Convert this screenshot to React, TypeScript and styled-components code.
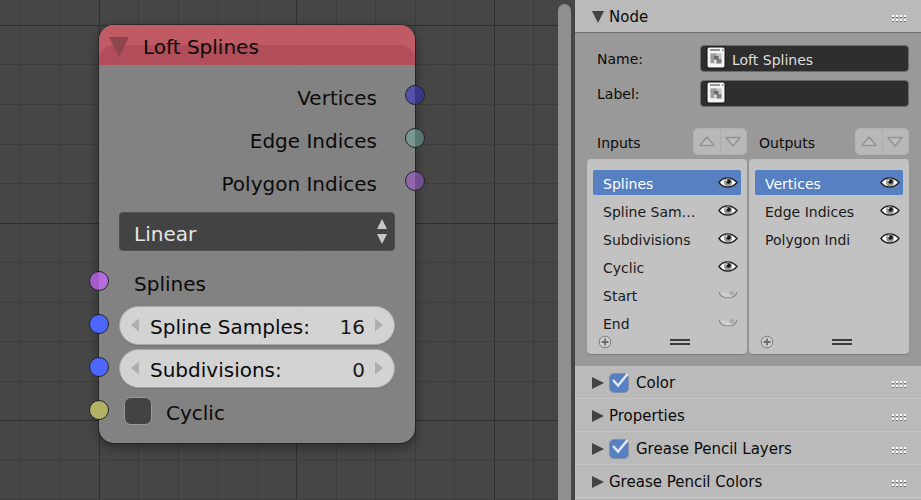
import React, { useState } from "react";
import styled, { createGlobalStyle } from "styled-components";

const GlobalStyle = createGlobalStyle`
  *, *::before, *::after { box-sizing: border-box; }
  html, body, #root { height: 100%; margin: 0; }
  body { background: #464646; }
  body, button, input, select { font-family: "DejaVu Sans", sans-serif; }
  button { padding: 0; border: 0; background: none; color: inherit; }
  input, select { margin: 0; outline: none; }
`;

const Screen = styled.div`
  display: grid;
  grid-template-columns: minmax(0, 1fr) 346px;
  height: 100vh;
  overflow: hidden;
  color: #0b0b0b;
`;

/* ---------- Node editor ---------- */

const Editor = styled.main`
  position: relative;
  display: flex;
  justify-content: flex-end;
  overflow: hidden;
  background: #464646;
`;

const GridLayer = styled.svg`
  position: absolute;
  inset: 0;
  width: 100%;
  height: 100%;
`;

const Track = styled.div`
  position: relative;
  display: flex;
  width: 17px;
  padding: 4px 4px 0 0;
  background: #464646;
`;

const Thumb = styled.div`
  flex: 1;
  border-radius: 7px 7px 0 0;
  background: #8f8f8f;
`;

const NodeCard = styled.section`
  position: absolute;
  left: 99px;
  top: 25px;
  width: 316px;
  border-radius: 15px;
  background: rgba(134, 134, 134, 0.95);
  box-shadow: 0 0 0 1px rgba(20, 20, 20, 0.45), 0 4px 12px rgba(0, 0, 0, 0.4);
  font-size: 20px;
  line-height: 24px;
`;

const NodeHeader = styled.header`
  position: relative;
  display: flex;
  align-items: center;
  gap: 14px;
  height: 40px;
  padding: 4px 10px 0;
  border-radius: 15px 15px 0 0;
  background: #c05a64;
  overflow: hidden;

  &::before {
    content: "";
    position: absolute;
    inset: 20px 0 0;
    border-radius: 15px 15px 0 0;
    background: #b24e59;
  }
`;

const Collapse = styled.button`
  position: relative;
  display: flex;
`;

const NodeTitle = styled.h1`
  position: relative;
  margin: 0;
  font-size: 20px;
  font-weight: 400;
`;

const NodeBody = styled.div`
  display: flex;
  flex-direction: column;
  padding: 8px 20px 12px;
`;

const SocketRow = styled.div<{ $out?: boolean }>`
  position: relative;
  display: flex;
  align-items: center;
  justify-content: ${(p) => (p.$out ? "flex-end" : "flex-start")};
  height: 43px;
  margin: 0 -20px;
  padding: 3px ${(p) => (p.$out ? 38 : 20)}px 0 20px;
`;

const Socket = styled.span<{ $fill: string; $inner: string; $right?: boolean }>`
  position: absolute;
  top: 12px;
  ${(p) => (p.$right ? "right" : "left")}: -10px;
  width: 20px;
  height: 20px;
  border: 1px solid #232323;
  border-radius: 50%;
  background: linear-gradient(90deg, ${(p) => p.$fill} 50%, ${(p) => p.$inner} 50%);
`;

const SocketText = styled.span<{ $indent?: boolean }>`
  padding: 3px 0 0 ${(p) => (p.$indent ? 15 : 0)}px;
`;

const SelectWrap = styled.div`
  position: relative;
  display: flex;
  margin: 10px 0 8px;

  svg {
    position: absolute;
    right: 7px;
    top: 6px;
    pointer-events: none;
  }
`;

const Select = styled.select`
  appearance: none;
  flex: 1;
  height: 39px;
  padding: 4px 30px 0 14px;
  border: 1px solid #4f4f4f;
  border-radius: 4px;
  background: #434343;
  color: #e6e6e6;
  font-size: 20px;
`;

const NumberBox = styled.div`
  display: flex;
  align-items: center;
  flex: 1;
  min-width: 0;
  height: 39px;
  padding: 0 11px;
  border: 1px solid #a8a8a8;
  border-radius: 20px;
  background: #d3d3d3;
  box-shadow: 0 1px 0 #747474;
`;

const NumberLabel = styled.label`
  flex: none;
  padding: 4px 0 0 11px;
`;

const NumberInput = styled.input`
  flex: 1;
  min-width: 0;
  padding: 4px 10px 0 0;
  border: 0;
  background: none;
  color: #1a1a1a;
  font-size: 20px;
  line-height: 24px;
  text-align: right;
`;

const Arrow = styled.button`
  display: flex;
`;

const NodeTick = styled.input`
  appearance: none;
  width: 28px;
  height: 28px;
  margin: 0 14px 0 5px;
  border: 1px solid #999;
  border-radius: 7px;
  background: #434343;

  &:checked { background: #5680c2; }
`;

/* ---------- Side panel ---------- */

const Side = styled.aside`
  display: flex;
  flex-direction: column;
  min-width: 0;
  background: #b9b9b9;
  overflow: hidden;
  font-size: 15px;
  line-height: 20px;
`;

const SectionBar = styled.header<{ $open?: boolean }>`
  display: flex;
  align-items: center;
  flex: none;
  height: 33px;
  padding: 2px 14px 0 16px;
  border-bottom: 1px solid ${(p) => (p.$open ? "#6e6e6e" : "#c6c6c6")};
  background: #bababa;
`;

const Disclosure = styled.button`
  display: flex;
  width: 16px;
  margin-right: 2px;
`;

const SectionTitle = styled.h2`
  flex: 1;
  margin: 0;
  font-size: 15px;
  font-weight: 400;
`;

const GripHandle = styled.span`
  display: flex;
  padding-top: 4px;
`;

const TickLabel = styled.label`
  position: relative;
  display: flex;
  align-items: center;
  gap: 7px;

  svg {
    position: absolute;
    left: 2px;
    top: 0;
    pointer-events: none;
  }
`;

const Tick = styled.input`
  appearance: none;
  width: 20px;
  height: 20px;
  border: 1px solid #8591a6;
  border-radius: 5px;
  background: #999;

  &:checked { background: #5680c2; }
  &:not(:checked) + svg { display: none; }
`;

const Settings = styled.div`
  flex: none;
  padding: 12px;
  background: #999;
  font-size: 14px;
`;

const Field = styled.div`
  position: relative;
  display: grid;
  grid-template-columns: 103px 1fr;
  align-items: center;
  height: 27px;
  margin-bottom: 8px;
  padding-left: 10px;

  svg {
    position: absolute;
    left: 119px;
    top: 1px;
    pointer-events: none;
  }
`;

const TextInput = styled.input`
  width: 100%;
  height: 27px;
  padding: 2px 8px 0 31px;
  border: 1px solid #6a6a6a;
  border-radius: 4px;
  background: #2e2e2e;
  color: #dedede;
  font-size: 14px;
`;

const Lists = styled.div`
  display: grid;
  grid-template-columns: 1fr 1fr;
  gap: 4px 2px;
  padding-top: 13px;
`;

const ListHead = styled.div`
  display: flex;
  align-items: center;
  justify-content: space-between;
  height: 27px;
  padding-left: 10px;
`;

const ListTitle = styled.h3`
  margin: 0;
  padding-top: 2px;
  font-size: 14px;
  font-weight: 400;
`;

const MoveGroup = styled.div`
  display: flex;
  width: 54px;
  height: 27px;
  border: 1px solid #b2b2b2;
  border-radius: 5px;
  background: #b8b8b8;
`;

const MoveButton = styled.button`
  display: flex;
  flex: 1;
  align-items: center;
  justify-content: center;

  & + & { border-left: 1px solid #acacac; }
`;

const ListBox = styled.div`
  display: flex;
  flex-direction: column;
  justify-content: space-between;
  min-width: 0;
  height: 195px;
  padding: 11px 6px 9px;
  border-radius: 4px;
  background: #c2c2c2;
  box-shadow: 0 1px 1px #7d7d7d;
`;

const Items = styled.ul`
  display: flex;
  flex-direction: column;
  gap: 3px;
  margin: 0;
  padding: 0;
  list-style: none;
`;

const Item = styled.li<{ $active: boolean }>`
  display: flex;
  align-items: center;
  height: 25px;
  padding: 0 3px 0 10px;
  border-radius: 2px;
  background: ${(p) => (p.$active ? "#5680c2" : "transparent")};
  color: ${(p) => (p.$active ? "#fff" : "#1a1a1a")};
`;

const ItemName = styled.button`
  flex: 1;
  min-width: 0;
  padding-top: 2px;
  overflow: hidden;
  font-size: 14px;
  line-height: 20px;
  text-align: left;
  white-space: nowrap;
`;

const EyeButton = styled.button`
  display: flex;
`;

const ListFoot = styled.div`
  display: grid;
  grid-template-columns: 72px 20px;
  align-items: center;
  height: 10px;
  padding-left: 5px;
`;

const FootButton = styled.button`
  display: flex;
`;

function BackgroundGrid() {
  const lines = Array.from({ length: 60 }, (_, i) => i - 5);
  const lineColor = (i: number) => (i % 5 === 0 ? "#303030" : "#3d3d3d");
  return (
    <GridLayer aria-hidden="true">
      {lines.map((i) => (
        <rect key={`v${i}`} x={Math.floor(99 + i * 39.5)} y="0" width="1" height="100%" fill={lineColor(i)} />
      ))}
      {lines.map((i) => (
        <rect key={`h${i}`} x="0" y={Math.floor(25.4 + i * 39.55)} width="100%" height="1" fill={lineColor(i)} />
      ))}
    </GridLayer>
  );
}

function Grip() {
  const dots = [0, 4, 8, 12].flatMap((x) => [0, 4].map((y) => ({ x, y })));
  return (
    <GripHandle>
      <svg width="16" height="8" aria-hidden="true" shapeRendering="crispEdges">
        {dots.map(({ x, y }) => (
          <g key={`${x}-${y}`}>
            <rect x={x + 1} y={y} width="2" height="2" fill="#fff" />
            <rect x={x + 1} y={y + 2} width="2" height="1" fill="#707070" />
          </g>
        ))}
      </svg>
    </GripHandle>
  );
}

function NodeIcon() {
  return (
    <svg width="20" height="23" viewBox="0 0 20 23" aria-hidden="true">
      <rect x="1" y="1" width="18" height="21" rx="2" fill="#f4f4f4" stroke="#111" />
      <path d="M4 4h10M16 4h1.500" stroke="#777" strokeWidth="1.300" />
      <path d="M4.500 7.500h11v10.500h-11z" fill="#e0e0e0" />
      <path d="M4.500 7.500h11v5h-11z" fill="#c4c4c4" />
      <path d="M4.500 7.500h6v4.500H8v5H4.500z" fill="#9b9b9b" />
      <path d="M10.500 13h5v4.500h-5z" fill="#808080" />
      <path d="M8 10h4.500v3.500H8z" fill="#6a6a6a" />
    </svg>
  );
}

function Eye({ open }: { open: boolean }) {
  if (!open) {
    return (
      <svg width="20" height="14" viewBox="0 0 20 14" aria-hidden="true">
        <path d="M1 4c4 2 13 0 18-1-1 6-4 8-9 8S2 9 1 4z" fill="#cfcfcf" />
        <ellipse cx="14" cy="5" rx="3" ry="2.500" fill="#aeaeae" />
        <path d="M1 4c2 8 16 8 18 0" fill="none" stroke="#8c8c8c" strokeWidth="1.200" />
      </svg>
    );
  }
  return (
    <svg width="20" height="14" viewBox="0 0 20 14" aria-hidden="true">
      <path d="M1 6.500C5 .5 14 .5 19 6.500 14 12.500 5 12.500 1 6.500z" fill="#fff" stroke="#222" strokeWidth="1.400" />
      <circle cx="10" cy="6.200" r="4" fill="#999" />
      <circle cx="10.500" cy="5.500" r="2.300" fill="#161616" />
      <circle cx="8.500" cy="4.500" r="1" fill="#e2e2e2" />
    </svg>
  );
}

type Entry = { name: string; visible: boolean };

function SocketList({ title, entries }: { title: string; entries: Entry[] }) {
  const [active, setActive] = useState(0);
  return (
    <ListBox>
      <Items aria-label={title}>
        {entries.map((entry, i) => (
          <Item key={entry.name} $active={i === active}>
            <ItemName type="button" onClick={() => setActive(i)}>{entry.name}</ItemName>
            <EyeButton type="button" aria-label={`Toggle ${entry.name}`}>
              <Eye open={entry.visible} />
            </EyeButton>
          </Item>
        ))}
      </Items>
      <ListFoot>
        <FootButton type="button" aria-label="Filter">
          <svg width="14" height="14" viewBox="0 0 14 14">
            <circle cx="7" cy="7" r="5.800" fill="#cecece" stroke="#7c7c7c" />
            <path d="M7 3.500v7M3.500 7h7" stroke="#6a6a6a" strokeWidth="1.800" />
          </svg>
        </FootButton>
        <FootButton type="button" aria-label="Resize list">
          <svg width="20" height="8" shapeRendering="crispEdges">
            <path d="M0 2h20M0 6h20" stroke="#3c3c3c" strokeWidth="2" />
          </svg>
        </FootButton>
      </ListFoot>
    </ListBox>
  );
}

function ListHeader({ title }: { title: string }) {
  return (
    <ListHead>
      <ListTitle>{title}</ListTitle>
      <MoveGroup>
        <MoveButton type="button" aria-label={`Move up in ${title}`}>
          <svg width="16" height="11" viewBox="0 0 16 11">
            <path d="M8 1l7 8.500H1z" fill="#bebebe" stroke="#939393" strokeWidth="1.400" strokeLinejoin="round" />
          </svg>
        </MoveButton>
        <MoveButton type="button" aria-label={`Move down in ${title}`}>
          <svg width="16" height="11" viewBox="0 0 16 11">
            <path d="M8 10l7-8.500H1z" fill="#bebebe" stroke="#939393" strokeWidth="1.400" strokeLinejoin="round" />
          </svg>
        </MoveButton>
      </MoveGroup>
    </ListHead>
  );
}

function NumberField({ id, label, initial }: { id: string; label: string; initial: string }) {
  const [value, setValue] = useState(initial);
  const step = (by: number) => setValue(String(Number(value) + by));
  return (
    <NumberBox>
      <Arrow type="button" aria-label={`Decrease ${label}`} onClick={() => step(-1)}>
        <svg width="8" height="14"><path d="M0 7l8-6.500v13z" fill="#adadad" /></svg>
      </Arrow>
      <NumberLabel htmlFor={id}>{label}:</NumberLabel>
      <NumberInput id={id} value={value} onChange={(e) => setValue(e.target.value)} />
      <Arrow type="button" aria-label={`Increase ${label}`} onClick={() => step(1)}>
        <svg width="8" height="14"><path d="M8 7L0 .5v13z" fill="#adadad" /></svg>
      </Arrow>
    </NumberBox>
  );
}

function ClosedSection({ title, tick }: { title: string; tick?: boolean }) {
  return (
    <SectionBar>
      <Disclosure type="button" aria-label={`Expand ${title}`}>
        <svg width="14" height="14"><path d="M1 1l12 6-12 6z" fill="#434343" /></svg>
      </Disclosure>
      <SectionTitle>
        {tick ? (
          <TickLabel>
            <Tick type="checkbox" defaultChecked />
            <svg width="20" height="16" viewBox="0 0 20 16">
              <path d="M2 7l5 5.500L16.500 1" fill="none" stroke="#e0e7f2" strokeWidth="2.500" />
            </svg>
            {title}
          </TickLabel>
        ) : (
          title
        )}
      </SectionTitle>
      <Grip />
    </SectionBar>
  );
}

const outputs = [
  { name: "Vertices", fill: "#5252a8", inner: "#373788" },
  { name: "Edge Indices", fill: "#789794", inner: "#587773" },
  { name: "Polygon Indices", fill: "#9066ac", inner: "#724d8d" },
];

const inputEntries: Entry[] = [
  { name: "Splines", visible: true },
  { name: "Spline Sam…", visible: true },
  { name: "Subdivisions", visible: true },
  { name: "Cyclic", visible: true },
  { name: "Start", visible: false },
  { name: "End", visible: false },
];

const outputEntries: Entry[] = [
  { name: "Vertices", visible: true },
  { name: "Edge Indices", visible: true },
  { name: "Polygon Indi", visible: true },
];

export default function App() {
  const [name, setName] = useState("Loft Splines");
  const [label, setLabel] = useState("");

  return (
    <>
      <GlobalStyle />
      <Screen>
        <Editor>
          <BackgroundGrid />
          <NodeCard>
            <NodeHeader>
              <Collapse type="button" aria-label="Collapse node">
                <svg width="20" height="20"><path d="M0 0h20L10 20z" fill="#8e464d" /></svg>
              </Collapse>
              <NodeTitle>Loft Splines</NodeTitle>
            </NodeHeader>
            <NodeBody>
              {outputs.map((o) => (
                <SocketRow key={o.name} $out>
                  <SocketText>{o.name}</SocketText>
                  <Socket $right $fill={o.fill} $inner={o.inner} />
                </SocketRow>
              ))}
              <SelectWrap>
                <Select aria-label="Interpolation" defaultValue="Linear">
                  <option>Linear</option>
                </Select>
                <svg width="12" height="27" aria-hidden="true">
                  <path d="M1 11L6 1l5 10zM1 16h10L6 26z" fill="#c6c6c6" />
                </svg>
              </SelectWrap>
              <SocketRow>
                <Socket $fill="#a45bc8" $inner="#b66cda" />
                <SocketText $indent>Splines</SocketText>
              </SocketRow>
              <SocketRow>
                <Socket $fill="#4c66ff" $inner="#4c66ff" />
                <NumberField id="samples" label="Spline Samples" initial="16" />
              </SocketRow>
              <SocketRow>
                <Socket $fill="#4c66ff" $inner="#4c66ff" />
                <NumberField id="subdivisions" label="Subdivisions" initial="0" />
              </SocketRow>
              <SocketRow>
                <Socket $fill="#b2b266" $inner="#b2b266" />
                <NodeTick id="cyclic" type="checkbox" />
                <SocketText as="label" htmlFor="cyclic">Cyclic</SocketText>
              </SocketRow>
            </NodeBody>
          </NodeCard>
          <Track>
            <Thumb />
          </Track>
        </Editor>

        <Side>
          <SectionBar $open>
            <Disclosure type="button" aria-label="Collapse Node">
              <svg width="14" height="14"><path d="M1 1h12L7 13z" fill="#434343" /></svg>
            </Disclosure>
            <SectionTitle>Node</SectionTitle>
            <Grip />
          </SectionBar>
          <Settings>
            <Field>
              <label htmlFor="node-name">Name:</label>
              <TextInput id="node-name" value={name} onChange={(e) => setName(e.target.value)} />
              <NodeIcon />
            </Field>
            <Field>
              <label htmlFor="node-label">Label:</label>
              <TextInput id="node-label" value={label} onChange={(e) => setLabel(e.target.value)} />
              <NodeIcon />
            </Field>
            <Lists>
              <ListHeader title="Inputs" />
              <ListHeader title="Outputs" />
              <SocketList title="Inputs" entries={inputEntries} />
              <SocketList title="Outputs" entries={outputEntries} />
            </Lists>
          </Settings>
          <ClosedSection title="Color" tick />
          <ClosedSection title="Properties" />
          <ClosedSection title="Grease Pencil Layers" tick />
          <ClosedSection title="Grease Pencil Colors" />
        </Side>
      </Screen>
    </>
  );
}
